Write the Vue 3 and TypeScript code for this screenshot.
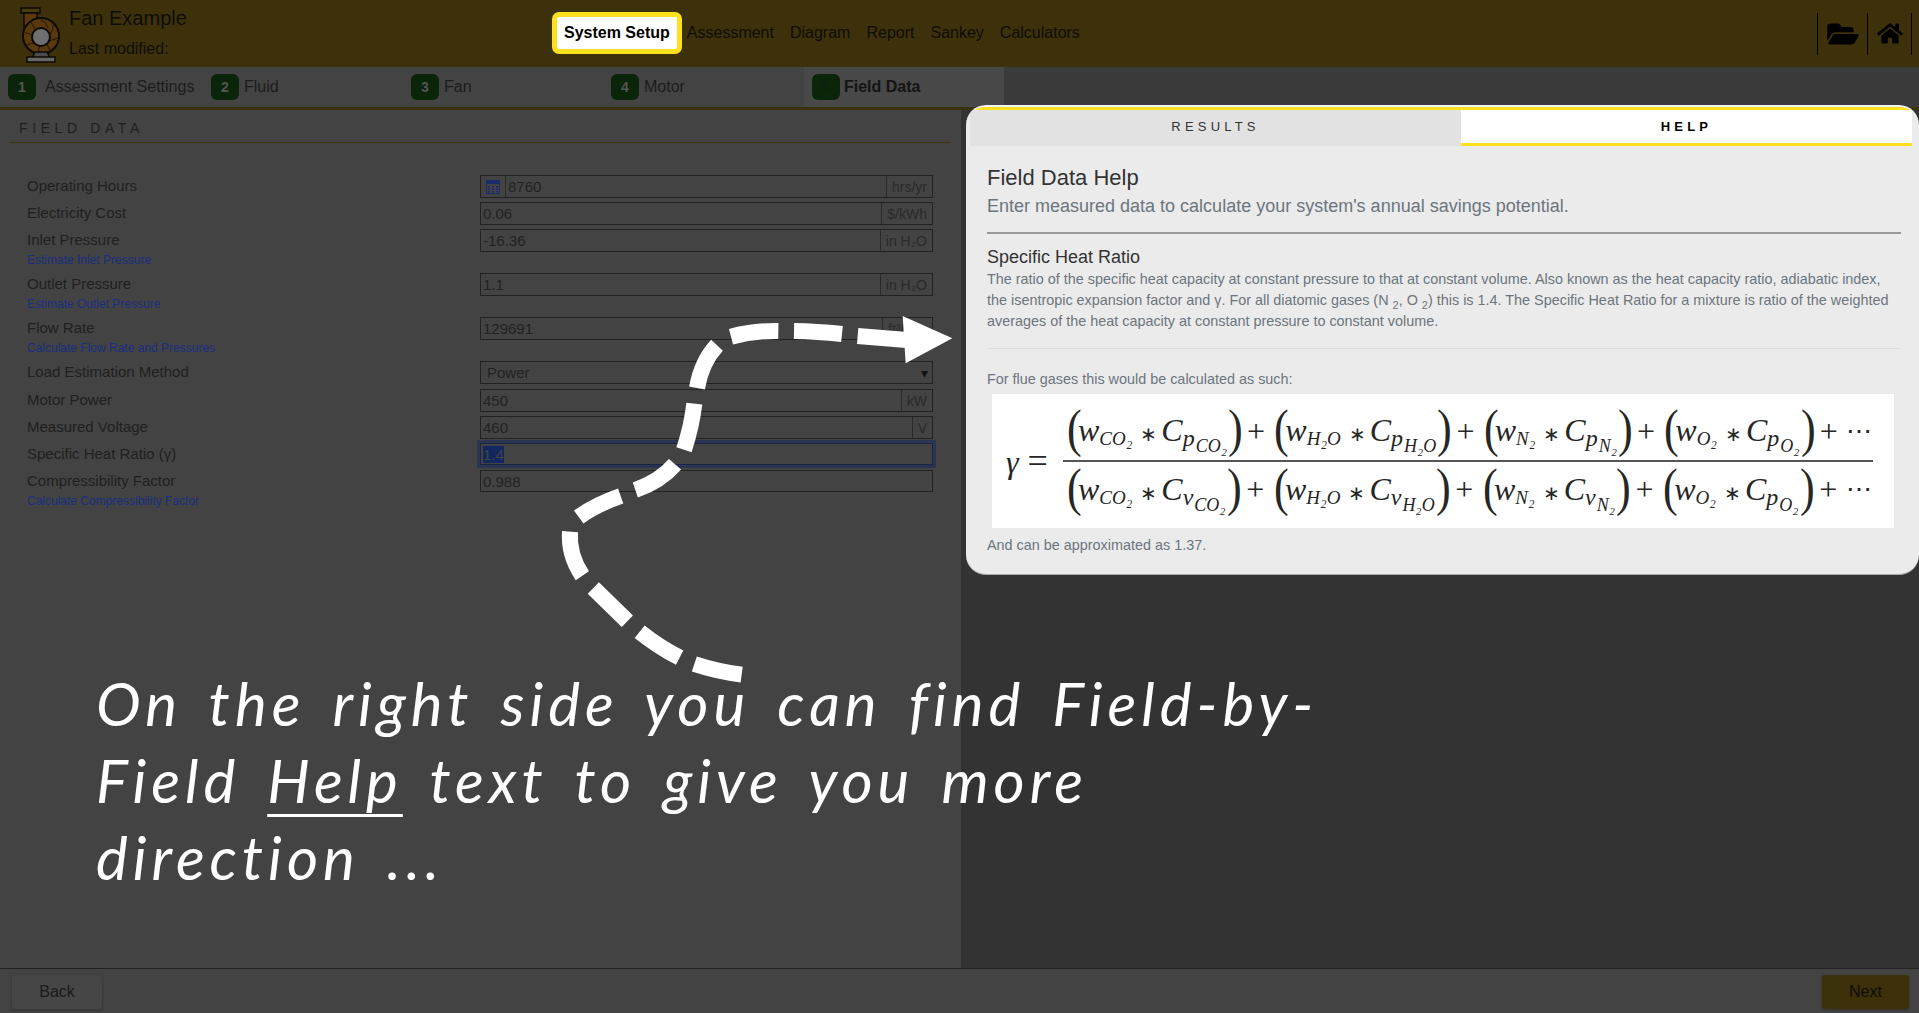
<script setup lang="ts">
interface Field {
  label: string;
  value: string;
  unit?: string;
  link?: string;
  kind?: string;
}

const navItems = ["Assessment", "Diagram", "Report", "Sankey", "Calculators"];
const steps = ["Assessment Settings", "Fluid", "Fan", "Motor", "Field Data"];

const fields: Field[] = [
  { label: "Operating Hours", value: "8760", unit: "hrs/yr", kind: "calc" },
  { label: "Electricity Cost", value: "0.06", unit: "$/kWh" },
  { label: "Inlet Pressure", value: "-16.36", unit: "in H₂O", link: "Estimate Inlet Pressure" },
  { label: "Outlet Pressure", value: "1.1", unit: "in H₂O", link: "Estimate Outlet Pressure" },
  { label: "Flow Rate", value: "129691", unit: "ft³/min", link: "Calculate Flow Rate and Pressures" },
  { label: "Load Estimation Method", value: "Power", kind: "select" },
  { label: "Motor Power", value: "450", unit: "kW" },
  { label: "Measured Voltage", value: "460", unit: "V" },
  { label: "Specific Heat Ratio (γ)", value: "1.4", kind: "focus" },
  { label: "Compressibility Factor", value: "0.988", link: "Calculate Compressibility Factor", kind: "last" },
];

const gases = ["CO₂", "H₂O", "N₂", "O₂"];

// bottom row repeats p for the last gas, same as the source image
const topTerms = gases.map((g) => ({ gas: g, sym: "p" }));
const bottomTerms = gases.map((g, i) => ({ gas: g, sym: i === 3 ? "p" : "v" }));
const rows = [topTerms, bottomTerms];

// dashes of the arrow, one path each so the gaps land where they should
const dashes = [
  "M605 1094Q530 1084 463 1062",
  "M419 1043Q355 1010 299 965",
  "M262 934L160 834",
  "M127 797Q85 735 90 665",
  "M116 621Q165 585 242 558",
  "M286 540Q360 515 405 463",
  "M432 419Q455 350 463 281",
  "M471 234Q485 155 531 106",
  "M573 80Q640 62 715 63",
  "M762 63Q830 64 906 72",
  "M953 78L1100 90",
];
</script>

<template>
  <div class="app">
    <header class="topbar">
      <div class="brand">
        <svg class="logo" viewBox="0 0 42 56" width="42" height="56">
          <rect x="1" y="1" width="19" height="5" fill="#4a3a10" stroke="#0c0a02" stroke-width="1.5" />
          <path d="M4 6h13v9L4 26z" fill="#5a3a0c" stroke="#0c0a02" stroke-width="1.5" />
          <circle cx="21" cy="29" r="18" fill="#5a3a0c" stroke="#0c0a02" stroke-width="2" />
          <path d="M21 13q6 3 7 8M33 18q0 6-3 9M37 31q-4 3-8 2M30 43q-3-5-4-8M18 45q1-5 3-8M7 38q4-2 8-2M5 26q5 0 8 3M11 15q3 4 4 8" fill="none" stroke="#2a1a05" stroke-width="1.2" />
          <circle cx="21" cy="30" r="9" fill="#6f6f6f" stroke="#0c0a02" stroke-width="2" />
          <path d="M15 45h12l3 6H12z" fill="#4a4a4a" stroke="#0c0a02" stroke-width="1.5" />
          <rect x="7" y="50" width="28" height="5" fill="#666" stroke="#0c0a02" stroke-width="1.5" />
        </svg>
        <div class="brand-text">
          <div class="brand-title">Fan Example</div>
          <div class="brand-sub">Last modified:</div>
        </div>
      </div>

      <nav class="nav">
        <a class="nav-active">System Setup</a>
        <a v-for="item in navItems" :key="item" class="nav-item">{{ item }}</a>
      </nav>

      <div class="tools">
        <span class="tool">
          <svg viewBox="0 0 576 512" width="32" height="28">
            <path d="M572.694 292.093L500.27 416.248A63.997 63.997 0 0 1 444.989 448H45.025c-18.523 0-30.064-20.093-20.731-36.093l72.424-124.155A64 64 0 0 1 152 256h399.964c18.523 0 30.064 20.093 20.73 36.093zM152 224h328v-48c0-26.51-21.49-48-48-48H272l-64-64H48C21.49 64 0 85.49 0 112v278.046l69.077-118.418C86.214 242.25 117.989 224 152 224z" />
          </svg>
        </span>
        <span class="tool tool-home">
          <svg viewBox="0 0 576 512" width="26" height="23">
            <path d="M280.37 148.26L96 300.11V464a16 16 0 0 0 16 16l112.06-.29a16 16 0 0 0 15.92-16V368a16 16 0 0 1 16-16h64a16 16 0 0 1 16 16v95.64a16 16 0 0 0 16 16.05L464 480a16 16 0 0 0 16-16V300L295.67 148.26a12.19 12.19 0 0 0-15.3 0zM571.6 251.47L488 182.56V44.05a12 12 0 0 0-12-12h-56a12 12 0 0 0-12 12v72.61L318.47 43a48 48 0 0 0-61 0L4.34 251.47a12 12 0 0 0-1.6 16.9l25.5 31A12 12 0 0 0 45.15 301l235.22-193.74a12.19 12.19 0 0 1 15.3 0L530.9 301a12 12 0 0 0 16.9-1.6l25.5-31a12 12 0 0 0-1.7-16.93z" />
          </svg>
        </span>
      </div>
    </header>

    <div class="steps">
      <div
        v-for="(s, i) in steps"
        :key="s"
        class="step"
        :class="{ 'step-active': i === 4 }"
      >
        <span class="badge">{{ i + 1 }}</span>
        <span>{{ s }}</span>
      </div>
    </div>

    <main class="main">
      <section class="left">
        <h2 class="pane-title">FIELD DATA</h2>
        <div class="form">
          <div
            v-for="f in fields"
            :key="f.label"
            class="row"
            :class="[f.kind, { 'has-link': f.link }]"
          >
            <div class="label-col">
              <div class="label">{{ f.label }}</div>
              <a v-if="f.link" class="link">{{ f.link }}</a>
            </div>
            <div class="input">
              <span v-if="f.kind === 'calc'" class="calc-cell">
                <svg viewBox="0 0 14 14" width="14" height="14">
                  <rect x="0.5" y="0.5" width="13" height="13" fill="none" stroke="#1a2a6a" />
                  <rect x="0" y="0" width="14" height="4" fill="#1a2a6a" />
                  <path d="M2 6h2v1.5H2zM6 6h2v1.5H6zM10 6h2v1.5h-2zM2 8.5h2V10H2zM6 8.5h2V10H6zM10 8.5h2V10h-2zM2 11h2v1.5H2zM6 11h2v1.5H6zM10 11h2v1.5h-2z" fill="#1a2a6a" />
                </svg>
              </span>
              <span class="value">
                <span :class="{ selected: f.kind === 'focus' }">{{ f.value }}</span>
              </span>
              <span v-if="f.kind === 'select'" class="caret">▾</span>
              <span v-if="f.unit" class="unit">{{ f.unit }}</span>
            </div>
          </div>
        </div>
      </section>

      <section class="right">
        <div class="panel">
          <div class="tabs">
            <div class="tab">RESULTS</div>
            <div class="tab tab-active">HELP</div>
          </div>
          <div class="help">
            <h3 class="help-title">Field Data Help</h3>
            <p class="help-sub">Enter measured data to calculate your system's annual savings potential.</p>
            <hr class="rule" />
            <h4 class="help-head">Specific Heat Ratio</h4>
            <p class="help-text">
              The ratio of the specific heat capacity at constant pressure to that at constant volume. Also known as the heat capacity ratio, adiabatic index, the isentropic expansion factor and γ. For all diatomic gases (N <sub>2</sub>, O <sub>2</sub>) this is 1.4. The Specific Heat Ratio for a mixture is ratio of the weighted averages of the heat capacity at constant pressure to constant volume.
            </p>
            <hr class="rule-light" />
            <p class="help-note">For flue gases this would be calculated as such:</p>
            <div class="formula">
              <div class="gamma"><i>γ</i><span class="eq">=</span></div>
              <div class="fraction">
                <div
                  v-for="(terms, r) in rows"
                  :key="r"
                  class="frac-row"
                  :class="{ 'frac-top': r === 0 }"
                >
                  <template v-for="t in terms" :key="t.gas">
                    <span class="term">
                      <span class="paren">(</span>
                      <i class="sym">w</i><span class="s1">{{ t.gas }}</span>
                      <span class="star">∗</span>
                      <i class="sym">C</i><i class="s1 s1-sym">{{ t.sym }}</i><span class="s2">{{ t.gas }}</span>
                      <span class="paren">)</span>
                    </span>
                    <span class="plus">+</span>
                  </template>
                  <span class="dots">⋯</span>
                </div>
              </div>
            </div>
            <p class="help-note help-end">And can be approximated as 1.37.</p>
          </div>
        </div>
      </section>
    </main>

    <footer class="footer">
      <button class="btn">Back</button>
      <button class="btn btn-next">Next</button>
    </footer>

    <svg class="arrow" viewBox="0 0 1320 1140" width="440" height="380">
      <path v-for="d in dashes" :key="d" :d="d" fill="none" stroke="#fff" stroke-width="48" />
      <path d="M1088 18L1237 85L1097 160z" fill="#fff" />
    </svg>

    <p class="note">
      On the right side you can find Field-by-<br />
      Field <u>Help</u> text to give you more<br />
      direction ...
    </p>
  </div>
</template>

<style>
html,
body {
  margin: 0;
  background: #434343;
}
</style>

<style scoped>
.app {
  position: relative;
  width: 1919px;
  height: 1013px;
  overflow: hidden;
  display: flex;
  flex-direction: column;
  background: #434343;
  color: #1f1f1f;
  font-family: "Liberation Sans", Arial, sans-serif;
  font-size: 15px;
}

/* top bar */
.topbar {
  flex: 0 0 67px;
  display: flex;
  align-items: center;
  background: #3d310b;
  color: #0f0c03;
}
.brand {
  flex: 0 0 552px;
  display: flex;
  align-items: center;
  padding-left: 20px;
  box-sizing: border-box;
  gap: 7px;
}
.logo {
  flex: none;
  margin-top: 3px;
}
.brand-text {
  margin-top: -3px;
}
.brand-title {
  font-size: 20px;
  line-height: 24px;
  margin-bottom: 10px;
}
.brand-sub {
  font-size: 16px;
  line-height: 18px;
}
.nav {
  display: flex;
  align-items: center;
  font-size: 16px;
  margin-top: -1px;
}
.nav-active {
  box-sizing: border-box;
  height: 42px;
  line-height: 32px;
  padding: 0 7px;
  border: 5px solid #ffe01f;
  border-radius: 7px;
  background: #fff;
  color: #000;
  font-weight: 700;
  margin-right: 5px;
}
.nav-item {
  padding-right: 16px;
}
.tools {
  margin-left: auto;
  display: flex;
  height: 42px;
  margin-right: 7px;
  border-right: 1px solid #000;
}
.tool {
  width: 49px;
  display: flex;
  align-items: center;
  justify-content: center;
  border-left: 1px solid #000;
}
.tool-home {
  width: 43px;
}
.tool svg {
  fill: #000;
}

/* wizard steps */
.steps {
  flex: 0 0 40px;
  display: flex;
  background: #3a3a3a;
  border-bottom: 3px solid #3d310b;
}
.step {
  width: 200px;
  flex: none;
  box-sizing: border-box;
  display: flex;
  align-items: center;
  gap: 5px;
  padding-left: 11px;
  background: #434343;
  color: #1c1c1c;
  font-size: 16px;
}
.step:first-child {
  padding-left: 8px;
  gap: 9px;
}
.step:nth-child(4) {
  width: 204px;
}
.step-active {
  background: #484848;
  padding-left: 8px;
  gap: 4px;
  font-weight: 700;
  color: #141414;
}
.badge {
  width: 28px;
  height: 26px;
  border-radius: 6px;
  background: #0a250a;
  color: #555;
  font-size: 14px;
  font-weight: 700;
  display: flex;
  align-items: center;
  justify-content: center;
  flex: none;
}
.step-active .badge {
  color: #0f1f0f;
}

/* main panes */
.main {
  flex: 1;
  display: flex;
  min-height: 0;
}
.left {
  flex: 0 0 961px;
  box-sizing: border-box;
  padding: 0 10px 0 9px;
}
.pane-title {
  margin: 0;
  padding: 10px 0 5px 10px;
  font-size: 14px;
  line-height: 17px;
  font-weight: 400;
  letter-spacing: 4.6px;
  color: #1f1f1f;
  border-bottom: 1px solid #3d310b;
}
.form {
  padding-top: 32px;
  width: 924px;
}
.row {
  display: flex;
  margin-bottom: 4px;
  padding-left: 18px;
}
.label-col {
  flex: 0 0 453px;
}
.label {
  line-height: 21px;
  margin-bottom: 2px;
  color: #1f1f1f;
}
.link {
  display: block;
  font-size: 12px;
  line-height: 16px;
  color: #1a2f80;
}
.has-link {
  height: 40px;
}
.input {
  flex: none;
  box-sizing: border-box;
  width: 453px;
  height: 23px;
  display: flex;
  align-items: center;
  border: 1px solid #222;
  color: #222;
}
.value {
  flex: 1;
  padding-left: 2px;
  line-height: 21px;
}
.unit {
  align-self: stretch;
  display: flex;
  align-items: center;
  padding: 0 5px;
  border-left: 1px solid #2a2a2a;
  color: #2a2a2a;
  font-size: 14px;
}
.calc-cell {
  align-self: stretch;
  width: 24px;
  display: flex;
  align-items: center;
  justify-content: center;
  border-right: 1px solid #2a2a2a;
}
.select {
  margin-bottom: 5px;
}
.select .value {
  padding-left: 6px;
}
.caret {
  font-size: 14px;
  color: #111;
  padding-right: 4px;
}
.focus .input {
  height: 22px;
  border-color: #1a2444;
  box-shadow: 0 0 0 3px #2b3450;
}
.selected {
  background: #12265f;
  color: #444;
}
.last .input {
  height: 22px;
}

/* help panel */
.right {
  flex: 1;
  background: #333;
  padding-left: 5px;
}
.panel {
  margin-top: -5px;
  position: relative;
  background: #ebebeb;
  border-radius: 20px;
  border-top: 2px solid #f4f4f4;
  border-bottom: 1px solid #aaa;
  overflow: hidden;
}
.tabs {
  display: flex;
  height: 36px;
  padding: 0 7px 0 4px;
  border-top: 3px solid #ffe01f;
}
.tab {
  flex: 0 0 491px;
  text-align: center;
  background: #e2e2e2;
  font-size: 13px;
  line-height: 33px;
  letter-spacing: 4.2px;
  color: #333;
}
.tab-active {
  flex: 1;
  background: #fff;
  border-bottom: 3px solid #ffe01f;
  color: #000;
  font-weight: 700;
}
.help {
  padding: 17px 18px 19px 21px;
}
.help-title {
  margin: 0;
  font-size: 22px;
  line-height: 30px;
  font-weight: 400;
  color: #333;
}
.help-sub {
  margin: -1px 0 0;
  font-size: 18px;
  line-height: 28px;
  color: #6c757d;
}
.rule {
  margin: 12px 0 0;
  border: 0;
  height: 2px;
  background: #999;
}
.help-head {
  margin: 12px 0 0;
  font-size: 18px;
  line-height: 22px;
  font-weight: 400;
  color: #333;
}
.help-text {
  margin: 1px 0 0;
  font-size: 14.4px;
  line-height: 21px;
  color: #6c757d;
}
.help-text sub {
  font-size: 11px;
  line-height: 0;
}
.rule-light {
  margin: 16px 0 0;
  border: 0;
  height: 1px;
  background: #ddd;
}
.help-note {
  margin: 20px 0 0;
  font-size: 14.4px;
  line-height: 20px;
  color: #6c757d;
}
.help-end {
  margin-top: 7px;
}

/* formula, all text */
.formula {
  margin: 5px 7px 0 5px;
  height: 134px;
  box-sizing: border-box;
  background: #fff;
  display: flex;
  align-items: center;
  color: #262626;
  font-family: "Liberation Serif", "Times New Roman", serif;
  font-size: 32px;
}
.gamma {
  flex: 0 0 71px;
  box-sizing: border-box;
  padding-left: 14px;
  white-space: nowrap;
}
.eq {
  margin-left: 9px;
  font-size: 36px;
}
.fraction {
  flex: 0 0 810px;
}
.frac-row {
  height: 53px;
  display: flex;
  align-items: center;
  justify-content: space-between;
  box-sizing: border-box;
  padding: 0 1px 10px 3px;
}
.frac-top {
  height: 55px;
  padding-bottom: 17px;
  border-bottom: 2px solid #555;
}
.term {
  display: flex;
  align-items: baseline;
  white-space: nowrap;
}
.paren {
  width: 12px;
  text-align: center;
  font-size: 52px;
  line-height: 46px;
  font-weight: 400;
  transform: translateY(5px) scaleX(0.85);
}
.sym {
  font-size: 32px;
}
.s1 {
  font-size: 19px;
  transform: translateY(4px);
  font-style: italic;
}
.s1-sym {
  font-size: 24px;
  transform: translateY(5px);
}
.s2 {
  font-size: 18px;
  transform: translateY(11px);
  font-style: italic;
  margin-left: 1px;
}
.star {
  margin: 0 4px 0 8px;
  font-size: 20px;
}
.plus {
  font-size: 32px;
  transform: translateY(6px);
}
.dots {
  font-size: 26px;
  transform: translateY(6px);
}

/* footer */
.footer {
  flex: 0 0 45px;
  box-sizing: border-box;
  display: flex;
  justify-content: space-between;
  align-items: center;
  padding: 1px 10px 0 12px;
  border-top: 1px solid #222;
  background: #434343;
}
.btn {
  width: 90px;
  height: 34px;
  border: 0;
  border-radius: 3px;
  background: #464646;
  box-shadow: 0 1px 3px rgba(0, 0, 0, 0.3);
  color: #1a1a1a;
  font-family: inherit;
  font-size: 16px;
}
.btn-next {
  width: 87px;
  background: #3d310b;
  color: #0f0c03;
}

/* annotation over the page */
.arrow {
  position: absolute;
  left: 540px;
  top: 310px;
}
.note {
  position: absolute;
  left: 96px;
  top: 665px;
  margin: 0;
  white-space: nowrap;
  font-family: Lato, "Noto Sans", sans-serif;
  font-style: italic;
  font-size: 60px;
  line-height: 77px;
  letter-spacing: 5px;
  word-spacing: 8px;
  color: #fff;
}
.note u {
  text-decoration-thickness: 3px;
  text-underline-offset: 11px;
}
</style>
